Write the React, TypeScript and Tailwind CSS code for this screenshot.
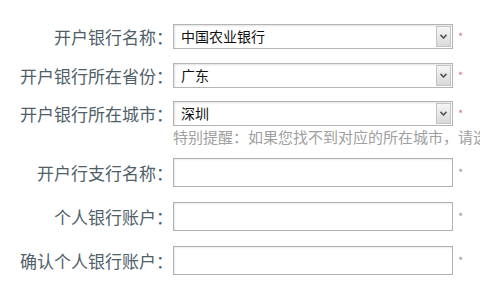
import React from "react";

const font = { fontFamily: '"Noto Sans CJK SC", "Noto Sans", sans-serif' };

function Label({ text }: { text: string }) {
  return (
    <div className="w-[173px] shrink-0 text-right text-[17px] leading-none text-[#4f6069]">
      {text}
    </div>
  );
}

function Star({ red }: { red?: boolean }) {
  return (
    <span className={`ml-[5px] text-[11px] leading-none ${red ? "text-[#e07a86]" : "text-[#9a9a9a]"}`}>*</span>
  );
}

function Select({ value }: { value: string }) {
  return (
    <div className="flex h-[25px] w-[280px] border border-[#b4b4b4] bg-white shadow-[inset_1px_1px_2px_rgba(0,0,0,0.12)]">
      <div className="flex flex-1 items-center pl-[7px] text-[14px] text-[#111]">{value}</div>
      <div className="m-[1px] flex w-[15px] items-center justify-center border border-[#c4c4c4] bg-gradient-to-b from-[#f6f6f6] to-[#d9d9d9]">
        <svg width="7" height="5" viewBox="0 0 7 5">
          <path d="M0.5 0.8 L3.5 4 L6.5 0.8" fill="none" stroke="#555" strokeWidth="1.6" />
        </svg>
      </div>
    </div>
  );
}

function Input() {
  return <div className="h-[29px] w-[280px] border border-[#b0b0b0] bg-white shadow-[inset_1px_1px_2px_rgba(0,0,0,0.08)]" />;
}

export default function App() {
  return (
    <div className="h-[300px] w-[480px] overflow-hidden bg-white pt-[24px]" style={font}>
      <div className="flex flex-col">
        <div className="flex items-center">
          <Label text="开户银行名称：" />
          <Select value="中国农业银行" />
          <Star red />
        </div>
        <div className="mt-[14px] flex items-center">
          <Label text="开户银行所在省份：" />
          <Select value="广东" />
          <Star red />
        </div>
        <div className="mt-[13px] flex items-center">
          <Label text="开户银行所在城市：" />
          <Select value="深圳" />
          <Star red />
        </div>
        <div className="flex h-[20px] items-center">
          <div className="w-[173px] shrink-0" />
          <div className="whitespace-nowrap text-[15px] leading-none text-[#a0a0a0]">特别提醒：如果您找不到对应的所在城市，请选择</div>
        </div>
        <div className="mt-[12px] flex items-center">
          <Label text="开户行支行名称：" />
          <Input />
          <Star />
        </div>
        <div className="mt-[15px] flex items-center">
          <Label text="个人银行账户：" />
          <Input />
          <Star />
        </div>
        <div className="mt-[15px] flex items-center">
          <Label text="确认个人银行账户：" />
          <Input />
          <Star />
        </div>
      </div>
    </div>
  );
}
